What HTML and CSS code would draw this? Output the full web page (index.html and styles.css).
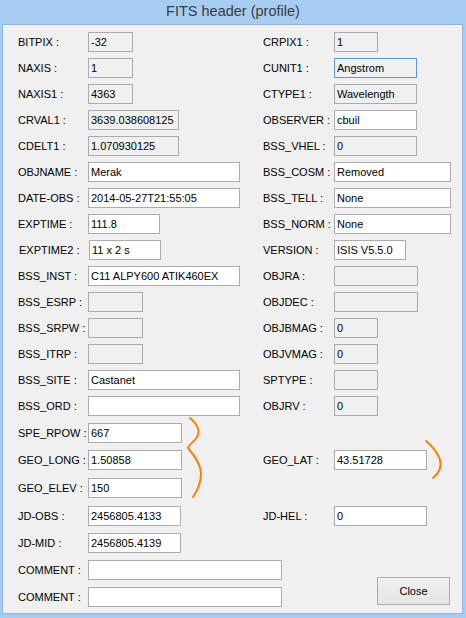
FILE: index.html
```html
<!DOCTYPE html>
<html lang="en">
	<head>
		<meta charset="UTF-8" />
		<title>FITS header (profile)</title>
		<link rel="stylesheet" href="styles.css">
	</head>
	<body>
		<div class="window">
			<div class="titlebar">FITS header (profile)</div>
			<div class="client">
				<div class="grid top">
					<div class="lbl">BITPIX :</div><div><input class="ro w45" value="-32" readonly></div>
					<div class="lbl">CRPIX1 :</div><div><input class="ro w44" value="1" readonly></div>

					<div class="lbl">NAXIS :</div><div><input class="ro w45" value="1" readonly></div>
					<div class="lbl">CUNIT1 :</div><div><input class="ro w83 focus" value="Angstrom" readonly></div>

					<div class="lbl">NAXIS1 :</div><div><input class="ro w45" value="4363" readonly></div>
					<div class="lbl">CTYPE1 :</div><div><input class="ro w83" value="Wavelength" readonly></div>

					<div class="lbl">CRVAL1 :</div><div><input class="ro w91" value="3639.038608125" readonly></div>
					<div class="lbl">OBSERVER :</div><div><input class="w83" value="cbuil"></div>

					<div class="lbl">CDELT1 :</div><div><input class="ro w91" value="1.070930125" readonly></div>
					<div class="lbl">BSS_VHEL :</div><div><input class="ro w83" value="0" readonly></div>

					<div class="lbl">OBJNAME :</div><div><input class="w152" value="Merak"></div>
					<div class="lbl">BSS_COSM :</div><div><input class="w117" value="Removed"></div>

					<div class="lbl">DATE-OBS :</div><div><input class="w152" value="2014-05-27T21:55:05"></div>
					<div class="lbl">BSS_TELL :</div><div><input class="w117" value="None"></div>

					<div class="lbl">EXPTIME :</div><div><input class="w72" value="111.8"></div>
					<div class="lbl">BSS_NORM :</div><div><input class="w117" value="None"></div>

					<div class="lbl shift">EXPTIME2 :</div><div><input class="w72 shift" value="11 x 2 s"></div>
					<div class="lbl">VERSION :</div><div><input class="w72" value="ISIS V5.5.0"></div>

					<div class="lbl">BSS_INST :</div><div><input class="w152" value="C11 ALPY600 ATIK460EX"></div>
					<div class="lbl">OBJRA :</div><div><input class="ro w84" value="" readonly></div>

					<div class="lbl">BSS_ESRP :</div><div><input class="ro w55" value="" readonly></div>
					<div class="lbl">OBJDEC :</div><div><input class="ro w84" value="" readonly></div>

					<div class="lbl">BSS_SRPW :</div><div><input class="ro w55" value="" readonly></div>
					<div class="lbl">OBJBMAG :</div><div><input class="ro w44" value="0" readonly></div>

					<div class="lbl">BSS_ITRP :</div><div><input class="ro w55" value="" readonly></div>
					<div class="lbl">OBJVMAG :</div><div><input class="ro w44" value="0" readonly></div>

					<div class="lbl">BSS_SITE :</div><div><input class="w152" value="Castanet"></div>
					<div class="lbl">SPTYPE :</div><div><input class="ro w44" value="" readonly></div>

					<div class="lbl">BSS_ORD :</div><div><input class="w152" value=""></div>
					<div class="lbl">OBJRV :</div><div><input class="ro w44" value="0" readonly></div>
				</div>

				<div class="grid bottom">
					<div class="lbl">SPE_RPOW :</div><div><input class="w94" value="667"></div>
					<div></div><div></div>

					<div class="lbl">GEO_LONG :</div><div><input class="w94" value="1.50858"></div>
					<div class="lbl">GEO_LAT :</div><div><input class="w93" value="43.51728"></div>

					<div class="lbl">GEO_ELEV :</div><div><input class="w94" value="150"></div>
					<div></div><div></div>

					<div class="lbl">JD-OBS :</div><div><input class="w93" value="2456805.4133"></div>
					<div class="lbl">JD-HEL :</div><div><input class="w93" value="0"></div>

					<div class="lbl">JD-MID :</div><div><input class="w93" value="2456805.4139"></div>
					<div></div><div></div>

					<div class="lbl">COMMENT :</div><div><input class="w194" value=""></div>
					<div></div>

					<div class="lbl">COMMENT :</div><div><input class="w194" value=""></div>

					<button class="close">Close</button>
				</div>

				<!-- annotations drawn over the form -->
				<svg class="marks" width="460" height="588" viewBox="3 25 460 588">
					<path d="M190,418 C196,423 200,429 198,435 C196,441 188,445 188,448 C194,455 201,464 201,474 C201,484 197,491 193,497" />
					<path d="M426,441 C432,446 437,451 440,460 C442,468 438,474 433,478" />
				</svg>
			</div>
		</div>
	</body>
</html>
```

FILE: styles.css
```css
* {
	margin: 0;
	padding: 0;
	box-sizing: border-box;
}
body {
	width: 466px;
	height: 618px;
	background: #a6cdf1;
	font-family: "Liberation Sans", Arial, sans-serif;
	font-size: 11px;
	color: #000;
	overflow: hidden;
}
.window {
	width: 466px;
	height: 618px;
}
.titlebar {
	height: 24px;
	line-height: 22px;
	text-align: center;
	font-size: 14.5px;
	color: #3b3b3b;
}
.client {
	position: relative;
	margin: 0 3px 0 2px;
	height: 590px;
	background: #f0f0f0;
	border: 1px solid #93b8dd;
	border-top-color: #8fb3d8;
}
.grid {
	display: grid;
	grid-template-columns: 70px 175px 71px 1fr;
	padding-left: 15px;
}
.top {
	padding-top: 7px;
	grid-auto-rows: 20px;
	row-gap: 6px;
}
.bottom {
	margin-top: 7px;
	grid-template-rows: 20px 21px 21px 20px 20px 20px 20px;
	row-gap: 7px;
}
.lbl {
	height: 20px;
	line-height: 20px;
	white-space: nowrap;
}
.shift {
	margin-left: 1px;
}
input {
	display: block;
	height: 20px;
	border: 1px solid #acacac;
	background: #fff;
	padding: 0 2px;
	font-family: "Liberation Sans", Arial, sans-serif;
	font-size: 11px;
	color: #000;
	outline: none;
}
input.ro {
	background: #f0f0f0;
}
input.focus {
	border-color: #569de5;
}
.w44 { width: 44px; }
.w45 { width: 45px; }
.w55 { width: 55px; }
.w72 { width: 72px; }
.w83 { width: 83px; }
.w84 { width: 84px; }
.w91 { width: 91px; }
.w93 { width: 93px; }
.w94 { width: 94px; }
.w117 { width: 117px; }
.w152 { width: 152px; }
.w194 { width: 194px; }
.close {
	grid-column: 4;
	grid-row: 6 / span 2;
	align-self: end;
	justify-self: start;
	margin: 0 0 2px 43px;
	width: 73px;
	height: 28px;
	border: 1px solid #adadad;
	background: linear-gradient(#f0f0f0, #e5e5e5);
	font-family: "Liberation Sans", Arial, sans-serif;
	font-size: 11px;
	color: #000;
}
.marks {
	position: absolute;
	left: 0;
	top: 0;
	fill: none;
	stroke: #ff7f00;
	stroke-width: 2;
	stroke-linecap: round;
	pointer-events: none;
}
```
